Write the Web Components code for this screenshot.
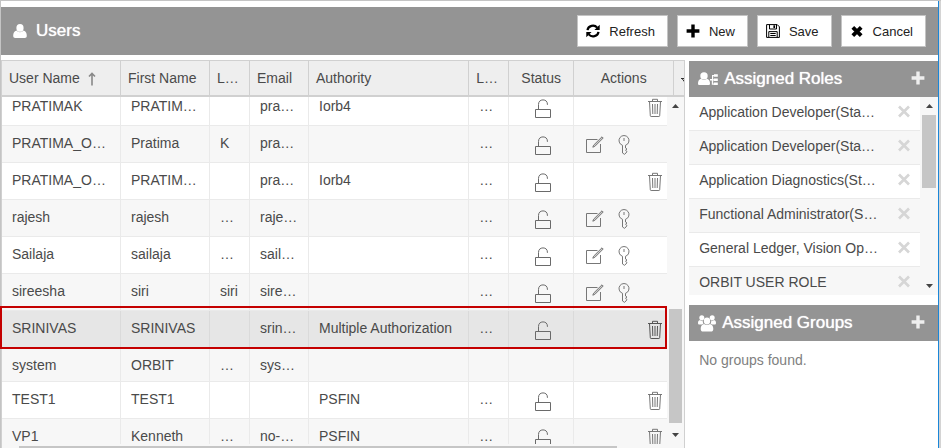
<!DOCTYPE html>
<html lang="en">
<head>
<meta charset="utf-8">
<title>Users</title>
<style>
html, body { height: 100%; }
body { margin: 0; background: #fff; font: 14px "Liberation Sans", Arial, sans-serif; color: #4a4a4a; }
</style>
</head>
<body>
<users-page></users-page>
<script>
const ICONS = {
  user: ['0 0 14 14', '<g fill="currentColor"><ellipse cx="7" cy="3.9" rx="3.6" ry="3.9"/><path d="M3.6 6.6C1 7.300.2 9.300.2 12c0 1.300.8 2 2 2h9.600c1.200 0 2-.7 2-2 0-2.700-.8-4.700-3.400-5.400-.9 1-2 1.600-3.400 1.600S4.500 7.600 3.600 6.600z"/></g>'],
  refresh: ['0 0 14 14', '<g fill="none" stroke="currentColor" stroke-width="2.2"><path d="M1.500 6.200A5.500 5.300 0 0 1 11.200 3.600"/><path d="M12.500 7.800A5.500 5.300 0 0 1 2.800 10.400"/></g><path fill="currentColor" d="M13.700.8v5.300H8.400zM.3 13.200V7.900h5.300z"/>'],
  plus: ['0 0 14 14', '<path fill="currentColor" d="M5.300.6h3.400v4.700h4.700v3.400H8.700v4.700H5.300V8.700H.6V5.300h4.700z"/>'],
  save: ['0 0 14 14', '<path d="M.6.600h10.600l2.200 2.200v10.600H.600z" fill="none" stroke="currentColor"/><path d="M3.500.6v4.400h7V.6M2.800 13.400V7.600h8.400v5.800M4.300 9.500h5.400M4.300 11.500h5.400" fill="none" stroke="currentColor"/><path d="M7.400 1.300h1.700v2.700H7.400z" fill="currentColor"/>'],
  times: ['0 0 14 14', '<path fill="none" stroke="currentColor" stroke-width="3.800" d="M2.800 3.300l8.400 8.400M11.200 3.300l-8.400 8.400"/>'],
  remove: ['0 0 14 14', '<path fill="none" stroke="currentColor" stroke-width="2.700" d="M2 2.500l10 10M12 2.500L2 12.500"/>'],
  roles: ['0 0 20 14', '<g fill="currentColor"><circle cx="6" cy="3.900" r="3.700"/><path d="M3 6.800C.8 7.500 0 9.300 0 11.500 0 12.600.6 13 1.500 13h9c.9 0 1.500-.4 1.500-1.500 0-2.200-.8-4-3-4.700-.9.900-1.900 1.300-3 1.300s-2.100-.4-3-1.300z"/><path d="M12 7h2V3h2v1.300h-.8v2.900H16v1.300h-.8v3H16v1.300h-2.200V8.400H12zM16 2.300h3.800v2.500H16zM16 6.600h3.800v2.500H16zM16 10.500h3.800V13H16z"/></g>'],
  groups: ['0 0 18 17', '<g fill="currentColor"><circle cx="3.800" cy="2.800" r="2.500"/><circle cx="14.200" cy="2.800" r="2.500"/><path d="M2 5c-1.500.3-2 1.600-2 3 0 1 .6 1.500 1.500 1.500h2.600c.9-.9 1.400-1 1.400-1C4.700 7.500 4.600 6 4.800 5.300 3.800 5.900 2.700 5.700 2 5zM16 5c1.500.3 2 1.600 2 3 0 1-.6 1.500-1.500 1.500h-2.600c-.9-.9-1.400-1-1.400-1 .8-1 .9-2.500.7-3.200 1 .6 2.100.4 2.800-.3z"/><ellipse cx="9" cy="6" rx="3.200" ry="3.400"/><path d="M6 9c-2.400.5-3.300 2.500-3.300 5 0 1.700.9 2.600 2.400 2.600h7.800c1.500 0 2.400-.9 2.400-2.600 0-2.500-.9-4.500-3.300-5-.9.800-1.900 1.100-3 1.100S6.900 9.800 6 9z"/></g>'],
  lock: ['0 0 16 20', '<g fill="none" stroke="currentColor"><path d="M.5 10.500h15v8H.5z"/><path d="M3.500 10.500V5.500C3.500 2.500 5.300.9 8 .9s4.400 1.600 4.400 4.200v.8"/></g>'],
  trash: ['0 0 14 20', '<g fill="none" stroke="currentColor"><path d="M0 3.500h14M4.500 3.500V1.300h5v2.200M1.500 3.500l.8 14.200c0 .5.300.8.800.8h7.800c.5 0 .8-.3.800-.8l.8-14.200M4.500 6l.3 10M7 6v10M9.500 6l-.3 10"/></g>'],
  edit: ['0 0 18 18', '<g fill="none" stroke="currentColor"><path d="M11.500 3.500H.5v13h14V8"/><path d="M16 .8l1.200 1.200-8.400 8.400-2 .8.800-2z" fill="currentColor" fill-opacity=".35"/></g>'],
  key: ['0 0 12 20', '<g fill="none" stroke="currentColor"><path d="M4.500 10.300A5 5 0 1 1 7.500 10.300V13l1.500 1-1.500 1.300 1.500 1.200-1 1.500-1.500 1.300-2-1.300z"/><path d="M6 3v3"/></g>'],
  sort: ['0 0 8 14', '<path d="M4 13.500V2.500M1 4.500L4 1.500l3 3" fill="none" stroke="currentColor" stroke-width="1.600"/>'],
  up: ['0 0 7 4', '<path d="M0 4L3.500 0 7 4z" fill="currentColor"/>'],
  down: ['0 0 7 4', '<path d="M0 0l3.500 4L7 0z" fill="currentColor"/>'],
  menu: ['0 0 4 5', '<path d="M0 .5h4M1 .5l3 4" fill="none" stroke="currentColor"/>']
};

class UiIcon extends HTMLElement {
  connectedCallback() {
    const [box, art] = ICONS[this.getAttribute('name')];
    const [, , w, h] = box.split(' ');
    this.attachShadow({ mode: 'open' }).innerHTML =
      `<style>:host{display:inline-block;flex:none;line-height:0}svg{display:block}</style>
       <svg viewBox="${box}" width="${w}" height="${h}" aria-hidden="true">${art}</svg>`;
  }
}
customElements.define('ui-icon', UiIcon);

class ToolButton extends HTMLElement {
  connectedCallback() {
    this.attachShadow({ mode: 'open' }).innerHTML = `
      <style>
        :host { display: block; }
        button { display: flex; align-items: center; gap: 9px; height: 32px; padding: 0 12px 0 8px;
          border: 1px solid #c4c4c4; border-radius: 0; background: #fff; color: #000; font: inherit; font-size: 13px; }
        span { color: #222; }
      </style>
      <button type="button"><ui-icon name="${this.getAttribute('icon')}"></ui-icon><span><slot></slot></span></button>`;
  }
}
customElements.define('tool-button', ToolButton);

class TitleBar extends HTMLElement {
  connectedCallback() {
    this.attachShadow({ mode: 'open' }).innerHTML = `
      <style>
        :host { display: flex; align-items: center; height: 48px; padding: 0 12px; background: #949494; color: #fff; }
        h1 { flex: 1; margin: 0 0 0 9px; font-size: 17px; font-weight: 400; text-shadow: 0 0 1px #fff; }
        div { display: flex; gap: 9px; }
      </style>
      <ui-icon name="user"></ui-icon><h1><slot></slot></h1><div><slot name="tools"></slot></div>`;
  }
}
customElements.define('title-bar', TitleBar);

class ScrollTrack extends HTMLElement {
  connectedCallback() {
    this.attachShadow({ mode: 'open' }).innerHTML = `
      <style>
        :host { display: flex; flex-direction: column; align-items: center; width: 17px; flex: none;
          box-sizing: border-box; padding: 7px 0; background: #f7f7f7; color: #444; }
        .lane { flex: 1; align-self: stretch; display: flex; flex-direction: column; padding: 7px 2px; }
        .lane::before { content: ""; flex: var(--before, 0); }
        .lane::after { content: ""; flex: var(--after, 0); }
        i { flex: var(--thumb, 1); background: #c6c6c6; }
      </style>
      <ui-icon name="up"></ui-icon><div class="lane"><i></i></div><ui-icon name="down"></ui-icon>`;
  }
}
customElements.define('scroll-track', ScrollTrack);

const USERS = [
  ['PRATIMAK', 'PRATIMAK', '', 'pratima', 'Iorb4', 1, 'd'],
  ['PRATIMA_ORB', 'Pratima', 'K', 'pratima', '', 1, 'e'],
  ['PRATIMA_ORB', 'PRATIMAK', '', 'pratima', 'Iorb4', 1, 'd'],
  ['rajesh', 'rajesh', '…', 'rajesh@', '', 1, 'e'],
  ['Sailaja', 'sailaja', '…', 'sailaja', '', 1, 'e'],
  ['sireesha', 'siri', 'siri', 'sireesha', '', 1, 'e'],
  ['SRINIVAS', 'SRINIVAS', '', 'srinivas', 'Multiple Authorization', 1, 'd'],
  ['system', 'ORBIT', '…', 'system', '', 0, ''],
  ['TEST1', 'TEST1', '', '', 'PSFIN', 1, 'd'],
  ['VP1', 'Kenneth', '…', 'no-reply', 'PSFIN', 1, 'd']
];
const act = (name, label) => `<button type="button" aria-label="${label}"><ui-icon name="${name}"></ui-icon></button>`;

class UsersGrid extends HTMLElement {
  connectedCallback() {
    const cols = last => `<colgroup><col style="width:119px"><col style="width:89px"><col style="width:40px"><col style="width:59px"><col><col style="width:40px"><col style="width:65px">${last}</colgroup>`;
    const rows = USERS.map(([u, f, l, e, a, open, kind]) => `
      <tr class="${u === 'SRINIVAS' ? 'sel' : ''}${open ? '' : ' plain'}">
        <td>${u}</td><td>${f}</td><td>${l}</td><td>${e}</td><td>${a}</td><td>${open ? '…' : ''}</td>
        <td class="st">${open ? '<ui-icon name="lock"></ui-icon>' : ''}</td>
        <td class="ac"><div class="${kind}">${kind === 'd' ? act('trash', 'Delete') : kind === 'e' ? act('edit', 'Edit') + act('key', 'Password') : ''}</div></td>
      </tr>`).join('');
    this.attachShadow({ mode: 'open' }).innerHTML = `
      <style>
        :host { display: flex; flex-direction: column; position: relative; min-width: 0; min-height: 0;
          border: 1px solid #d0d0d0; border-bottom: 0; }
        table { width: 100%; table-layout: fixed; border-collapse: separate; border-spacing: 0; }
        th, td { box-sizing: border-box; overflow: hidden; text-overflow: ellipsis; white-space: nowrap; text-align: left; font-weight: 400; }
        th { height: 36px; padding: 0 7px; background: #eee; border-right: 1px solid #d0d0d0; border-bottom: 2px solid #d0d0d0; }
        th:last-child { border-right: 0; padding: 0 0 7px 7px; text-overflow: clip; }
        th.mid { text-align: center; }
        th ui-icon { margin-left: 8px; color: #888; vertical-align: -3px; }
        th:last-child ui-icon { margin: 0; color: #333; }
        .body { flex: 1; display: flex; min-height: 0; }
        .rows { flex: 1; min-width: 0; overflow: hidden; }
        td { height: 37px; padding: 0 10px 3px; border-right: 1px solid #eaeaea; border-bottom: 1px solid #eaeaea; line-height: 32px; }
        td:last-child { border-right: 0; }
        tr.plain td { height: 34px; padding-bottom: 0; }
        tr:nth-child(even) td, tr.plain td { background: #f7f7f7; }
        tr.sel td { background: #e6e6e6; border-color: #dadada; }
        td.st { padding: 4px 0 0 4px; text-align: center; line-height: 0; color: #6a6a6a; }
        td.ac { padding: 4px 5px 0 12px; line-height: 0; }
        .d { display: flex; justify-content: flex-end; }
        .e { display: flex; align-items: center; gap: 14px; }
        button { padding: 0; border: 0; background: none; color: #777; }
        tr.sel button { color: #555; }
        .hbar { display: flex; height: 2px; background: #f7f7f7; padding: 2px 67px 0 17px; }
        .hbar i { flex: 1; background: #c6c6c6; }
        scroll-track { --before: 195; --thumb: 115; --after: 3; }
        .mark { position: absolute; left: -2px; right: 17px; top: 245px; height: 43px; box-sizing: border-box;
          border: 2px solid #c40000; pointer-events: none; }
      </style>
      <table>${cols('<col style="width:100px"><col style="width:10px">')}
        <thead><tr><th>User Name<ui-icon name="sort"></ui-icon></th><th>First Name</th><th>Last</th><th>Email</th><th>Authority</th><th>Last</th><th class="mid">Status</th><th class="mid">Actions</th><th><ui-icon name="menu"></ui-icon></th></tr></thead>
      </table>
      <div class="body">
        <div class="rows"><table>${cols('<col style="width:93px">')}<tbody>${rows}</tbody></table></div>
        <scroll-track></scroll-track>
      </div>
      <div class="hbar"><i></i></div>
      <div class="mark"></div>`;
    this.shadowRoot.querySelector('.rows').scrollTop = 8;
  }
}
customElements.define('users-grid', UsersGrid);

class SidePanel extends HTMLElement {
  connectedCallback() {
    this.attachShadow({ mode: 'open' }).innerHTML = `
      <style>
        :host { display: block; }
        header { display: flex; align-items: center; height: 36px; padding: 0 13px 0 9px; background: #949494; color: #fff; }
        h2 { flex: 1; margin: 0 0 0 6px; font-size: 17px; font-weight: 400; text-shadow: 0 0 1px #fff; }
        button { padding: 0; border: 0; background: none; color: #eee; }
      </style>
      <header><ui-icon name="${this.getAttribute('icon')}"></ui-icon><h2>${this.getAttribute('heading')}</h2>
      <button type="button" aria-label="Add"><ui-icon name="plus"></ui-icon></button></header><slot></slot>`;
  }
}
customElements.define('side-panel', SidePanel);

class RoleList extends HTMLElement {
  connectedCallback() {
    const roles = ['Application Developer(Standard)', 'Application Developer(Standard)', 'Application Diagnostics(Standard)', 'Functional Administrator(Standard)', 'General Ledger, Vision Operations', 'ORBIT USER ROLE'];
    this.attachShadow({ mode: 'open' }).innerHTML = `
      <style>
        :host { display: flex; height: 198px; }
        ul { flex: 1; min-width: 0; margin: 0; padding: 0; list-style: none; overflow: hidden; }
        li { display: flex; align-items: center; height: 34px; padding: 0 9px 3px 10px; box-sizing: border-box; border-bottom: 1px solid #eaeaea; }
        li:nth-child(even) { background: #f7f7f7; }
        span { flex: 1; min-width: 0; margin-right: 16px; overflow: hidden; text-overflow: ellipsis; white-space: nowrap; line-height: 20px; }
        button { padding: 0; border: 0; background: none; color: #d6d6d6; }
        scroll-track { width: 18px; --before: 0; --thumb: 73; --after: 88; }
      </style>
      <ul>${roles.map(r => `<li><span>${r}</span><button type="button" aria-label="Remove"><ui-icon name="remove"></ui-icon></button></li>`).join('')}</ul>
      <scroll-track></scroll-track>`;
  }
}
customElements.define('role-list', RoleList);

class UsersPage extends HTMLElement {
  connectedCallback() {
    this.attachShadow({ mode: 'open' }).innerHTML = `
      <style>
        :host { display: flex; height: 100vh; box-sizing: border-box; border-top: 1px solid #c4c4c4; border-left: 1px solid #c4c4c4; }
        main { flex: 1; min-width: 0; display: flex; flex-direction: column; padding-top: 6px; }
        .cols { flex: 1; min-height: 0; display: grid; grid-template-columns: minmax(0, 11fr) minmax(0, 4fr); gap: 4px; margin-top: 5px; }
        aside { display: flex; flex-direction: column; gap: 10px; padding-top: 1px; }
        p { margin: 0; padding: 10px; line-height: 18px; color: #808080; }
        .edge { width: 3px; box-sizing: border-box; border-left: 1px solid #1a86d8; background: #d4d4d4; }
      </style>
      <main>
        <title-bar>Users
          <tool-button slot="tools" icon="refresh">Refresh</tool-button>
          <tool-button slot="tools" icon="plus">New</tool-button>
          <tool-button slot="tools" icon="save">Save</tool-button>
          <tool-button slot="tools" icon="times">Cancel</tool-button>
        </title-bar>
        <div class="cols">
          <users-grid></users-grid>
          <aside>
            <side-panel icon="roles" heading="Assigned Roles"><role-list></role-list></side-panel>
            <side-panel icon="groups" heading="Assigned Groups"><p>No groups found.</p></side-panel>
          </aside>
        </div>
      </main>
      <div class="edge"></div>`;
  }
}
customElements.define('users-page', UsersPage);
</script>
</body>
</html>
